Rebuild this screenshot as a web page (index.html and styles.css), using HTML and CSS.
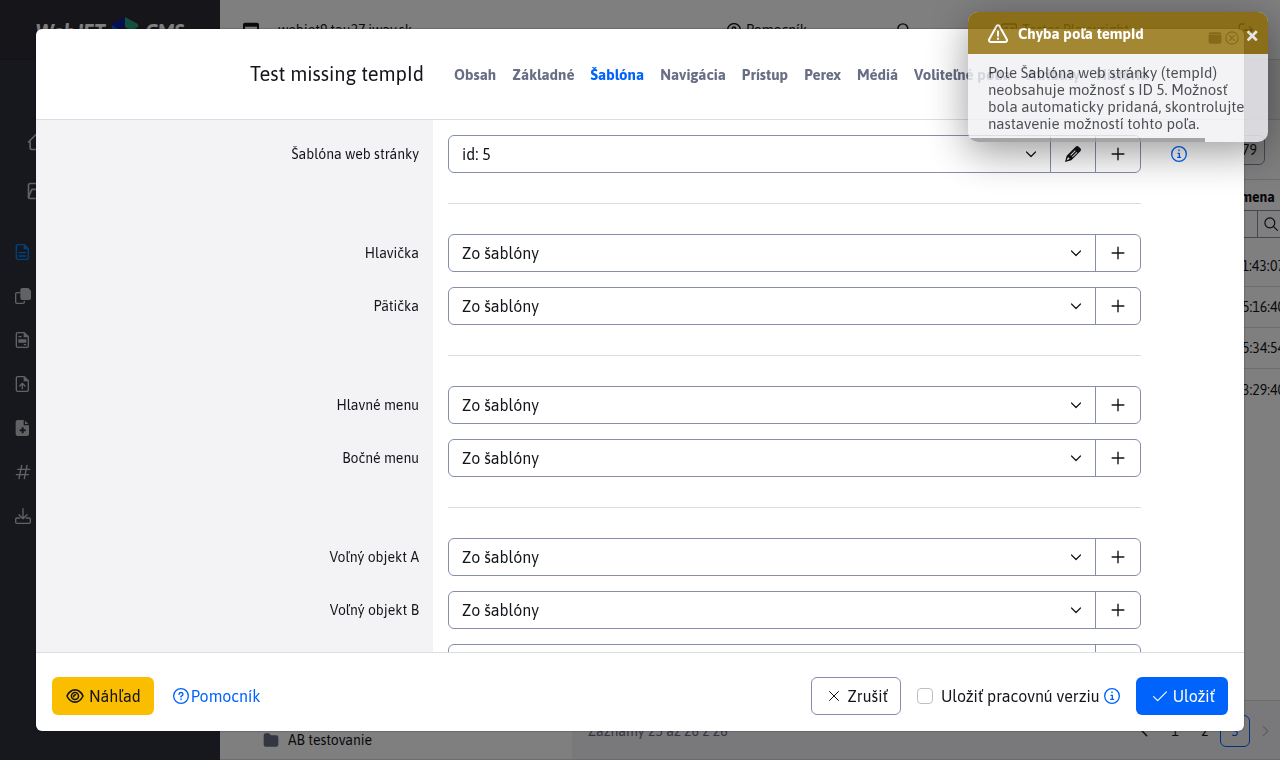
FILE: index.html
```html
<!DOCTYPE html>
<html lang="sk">
<head>
<meta charset="utf-8">
<title>WebJET CMS</title>
<link rel="stylesheet" href="styles.css">
</head>
<body>
<svg class="defs" aria-hidden="true">
  <symbol id="i-home" viewBox="0 0 24 24"><path d="M5 12H3l9-9 9 9h-2M5 12v7a2 2 0 0 0 2 2h10a2 2 0 0 0 2-2v-7"/></symbol>
  <symbol id="i-map" viewBox="0 0 24 24"><rect x="3" y="3" width="18" height="18" rx="2"/><path d="M3 19l4-9h6l3-4h5"/></symbol>
  <symbol id="i-doc" viewBox="0 0 24 24"><path d="M5 1h9l6 6v14a2 2 0 0 1-2 2H4a2 2 0 0 1-2-2V3a2 2 0 0 1 2-2zM6 13h10M6 18h10"/><path class="solid" d="M13 1l7 7h-7z"/></symbol>
  <symbol id="i-copy" viewBox="0 0 24 24"><path d="M8 7H3a2 2 0 0 0-2 2v12a2 2 0 0 0 2 2h9a2 2 0 0 0 2-2v-1"/><path class="solid" d="M11 0h9l4 4v11a3 3 0 0 1-3 3H11a3 3 0 0 1-3-3V3a3 3 0 0 1 3-3z"/></symbol>
  <symbol id="i-report" viewBox="0 0 24 24"><path d="M5 1h9l6 6v14a2 2 0 0 1-2 2H4a2 2 0 0 1-2-2V3a2 2 0 0 1 2-2zM6 7h3M14 19h2"/><path class="solid" d="M13 1l7 7h-7zM5 11h12v5H5z"/></symbol>
  <symbol id="i-upload" viewBox="0 0 24 24"><path d="M5 1h9l6 6v14a2 2 0 0 1-2 2H4a2 2 0 0 1-2-2V3a2 2 0 0 1 2-2zM11 19v-7M7 15l4-4 4 4"/><path class="solid" d="M13 1l7 7h-7z"/></symbol>
  <symbol id="i-add" viewBox="0 0 24 24"><path class="solid" fill-rule="evenodd" d="M4 0h9v8h8v13a3 3 0 0 1-3 3H4a3 3 0 0 1-3-3V3a3 3 0 0 1 3-3zM10 11v3H7v3h3v3h3v-3h3v-3h-3v-3zM15 1l5 5h-5z"/></symbol>
  <symbol id="i-hash" viewBox="0 0 24 24"><path d="M4 8h18M2 16h18M10 2L6 22M18 2l-4 20"/></symbol>
  <symbol id="i-download" viewBox="0 0 24 24"><path d="M12 1v15M6 10l6 6 6-6M7 15H3a2 2 0 0 0-2 2v4a2 2 0 0 0 2 2h18a2 2 0 0 0 2-2v-4a2 2 0 0 0-2-2h-4"/></symbol>
  <symbol id="i-window" viewBox="0 0 24 24"><path class="solid" fill-rule="evenodd" d="M3 1h18a3 3 0 0 1 3 3v16a3 3 0 0 1-3 3H3a3 3 0 0 1-3-3V4a3 3 0 0 1 3-3zM3 7v13h18V7z"/></symbol>
  <symbol id="i-panel" viewBox="0 0 24 24"><path class="solid" fill-rule="evenodd" d="M4 2h16a3 3 0 0 1 3 3v1H1V5a3 3 0 0 1 3-3zM1 7h22v12a3 3 0 0 1-3 3H4a3 3 0 0 1-3-3z"/></symbol>
  <symbol id="i-help" viewBox="0 0 24 24"><circle cx="12" cy="12" r="11"/><path d="M9 9.500q.3-2.700 3-2.700t3 2.400q0 1.600-3 3.300v1M12 16.500v1"/></symbol>
  <symbol id="i-info" viewBox="0 0 24 24"><circle cx="12" cy="12" r="11"/><path d="M12 6v1M10.500 11h2v6M10 17h4.500"/></symbol>
  <symbol id="i-search" viewBox="0 0 24 24"><circle cx="10" cy="10" r="8.500"/><path d="M16.500 16.500L23 23"/></symbol>
  <symbol id="i-card" viewBox="0 0 24 24"><rect x="1" y="3" width="22" height="18" rx="3"/><circle cx="8" cy="10" r="2"/><path d="M4 17q4-4 8 0M15 9h4M15 14h4"/></symbol>
  <symbol id="i-logout" viewBox="0 0 24 24"><path d="M9 3H5a3 3 0 0 0-3 3v12a3 3 0 0 0 3 3h4M9 12h13M17 7l5 5-5 5"/></symbol>
  <symbol id="i-down" viewBox="0 0 24 24"><path d="M3 8l9 9 9-9"/></symbol>
  <symbol id="i-left" viewBox="0 0 24 24"><path d="M15 4l-8 8 8 8"/></symbol>
  <symbol id="i-right" viewBox="0 0 24 24"><path d="M9 4l8 8-8 8"/></symbol>
  <symbol id="i-folder" viewBox="0 0 24 24"><path class="solid" d="M4 2h5l3 3h8a3 3 0 0 1 3 3v11a3 3 0 0 1-3 3H4a3 3 0 0 1-3-3V5a3 3 0 0 1 3-3z"/></symbol>
  <symbol id="i-plus" viewBox="0 0 24 24"><path d="M12 2v20M2 12h20"/></symbol>
  <symbol id="i-pencil" viewBox="0 0 24 24"><path class="solid" fill-rule="evenodd" d="M16 1q2.500-2 4.500 0l2.500 2.500q2 2 0 4.500L9.500 21.500 0 24l2.500-9.500zM4 18l-1.500 3.500L6 20l1-1-2-2zM15 6.500L8 13.500l1 1 7-7zM17.500 9l-7 7 1 1 7-7z"/></symbol>
  <symbol id="i-eye" viewBox="0 0 28 24"><path d="M1.500 12Q6 2.500 14 2.500T26.500 12Q22 21.500 14 21.500T1.500 12z"/><circle cx="14" cy="12" r="5.500"/><path d="M12 13q0-3 3-3"/></symbol>
  <symbol id="i-close" viewBox="0 0 24 24"><path d="M3 3l18 18M21 3L3 21"/></symbol>
  <symbol id="i-closecircle" viewBox="0 0 24 24"><circle cx="12" cy="12" r="10.500"/><path d="M8 8l8 8M16 8l-8 8"/></symbol>
  <symbol id="i-check" viewBox="0 0 24 24"><path d="M1 13l7 7L23 5"/></symbol>
  <symbol id="i-warn" viewBox="0 0 24 24"><path d="M10.300 2.500a2 2 0 0 1 3.400 0l9 16a2 2 0 0 1-1.700 3H3a2 2 0 0 1-1.700-3zM12 9v5M12 17.500v.5"/></symbol>
</svg>

<div class="app">
  <aside class="sidebar">
    <div class="logo">
      <span>WebJET</span>
      <svg class="cube" viewBox="0 0 26 30"><path fill="#0a1fa8" d="M13 0v9L6 13v8l-6-4V7z"/><path fill="#1858d8" d="M0 8l6 4v9l-6-3z"/><path fill="#2aa07a" d="M13 0l13 7v3l-7 4-6-4z"/><path fill="#178a78" d="M13 13l10 4v7l-10 6z"/></svg>
      <span>CMS</span>
    </div>
    <nav class="main-menu" aria-label="Hlavné menu">
      <a href="#" aria-label="Úvod"><svg class="icon i20"><use href="#i-home"/></svg></a>
      <a href="#" aria-label="Web stránky"><svg class="icon i20"><use href="#i-map"/></svg></a>
    </nav>
    <nav class="sub-menu" aria-label="Podmenu">
      <a href="#" class="current" aria-label="Stránky"><svg class="icon i16"><use href="#i-doc"/></svg></a>
      <a href="#" aria-label="Šablóny"><svg class="icon i16"><use href="#i-copy"/></svg></a>
      <a href="#" aria-label="Štatistika"><svg class="icon i16"><use href="#i-report"/></svg></a>
      <a href="#" aria-label="Nahrať"><svg class="icon i16"><use href="#i-upload"/></svg></a>
      <a href="#" aria-label="Pridať"><svg class="icon i16"><use href="#i-add"/></svg></a>
      <a href="#" aria-label="Značky"><svg class="icon i16"><use href="#i-hash"/></svg></a>
      <a href="#" aria-label="Export"><svg class="icon i16"><use href="#i-download"/></svg></a>
    </nav>
  </aside>
  <main class="main">
    <header class="topbar">
      <svg class="icon i16"><use href="#i-window"/></svg>
      <span class="host">webjet9.tau27.iway.sk</span>
      <a href="#" class="top-link"><svg class="icon i14 bold"><use href="#i-help"/></svg>Pomocník</a>
      <button class="plain" aria-label="Hľadať"><svg class="icon i14 bold"><use href="#i-search"/></svg></button>
      <a href="#" class="top-link user"><svg class="icon i16"><use href="#i-card"/></svg>Tester Playwright<svg class="icon i10"><use href="#i-down"/></svg></a>
      <button class="plain" aria-label="Odhlásiť"><svg class="icon i16"><use href="#i-logout"/></svg></button>
    </header>
    <div class="content">
      <section class="tree">
        <a href="#"><svg class="icon i16"><use href="#i-folder"/></svg>AB testovanie</a>
      </section>
      <section class="list">
        <div class="list-tabs"></div>
        <div class="list-tools"><span class="id-box">79</span></div>
        <table class="grid">
          <thead>
            <tr><th>zmena</th></tr>
            <tr class="filter"><td><div><button class="plain" aria-label="Filtrovať"><svg class="icon i14"><use href="#i-search"/></svg></button></div></td></tr>
          </thead>
          <tbody>
            <tr><td>11:43:07</td></tr>
            <tr><td>15:16:40</td></tr>
            <tr><td>15:34:54</td></tr>
            <tr><td>13:29:40</td></tr>
          </tbody>
        </table>
        <footer class="list-foot">
          <span class="count">Záznamy 25 až 26 z 26</span>
          <button class="page" aria-label="Späť"><svg class="icon i14 bold"><use href="#i-left"/></svg></button>
          <button class="page">1</button>
          <button class="page">2</button>
          <button class="page active">3</button>
          <button class="page off" aria-label="Ďalej" disabled><svg class="icon i14"><use href="#i-right"/></svg></button>
        </footer>
      </section>
    </div>
  </main>
</div>

<div class="backdrop">
  <div class="modal" role="dialog" aria-labelledby="dlg-title">
    <header class="modal-head">
      <h1 id="dlg-title">Test missing tempId</h1>
      <nav class="tabs" aria-label="Karty">
        <a href="#">Obsah</a><a href="#">Základné</a><a href="#" class="active">Šablóna</a><a href="#">Navigácia</a><a href="#">Prístup</a><a href="#">Perex</a><a href="#">Médiá</a><a href="#">Voliteľné polia</a><a href="#">Atribúty</a><a href="#">História</a>
      </nav>
      <div class="win-tools">
        <button class="plain" aria-label="Maximalizovať"><svg class="icon i14"><use href="#i-panel"/></svg></button>
        <button class="plain" aria-label="Zavrieť"><svg class="icon i14"><use href="#i-closecircle"/></svg></button>
      </div>
    </header>
    <form class="modal-body" id="form">
      <div class="row">
        <label for="f1">Šablóna web stránky</label>
        <div class="group">
          <span class="pick"><select id="f1"><option>id: 5</option></select><svg class="icon i12 bold"><use href="#i-down"/></svg></span>
          <button type="button" aria-label="Upraviť"><svg class="icon i16"><use href="#i-pencil"/></svg></button>
          <button type="button" aria-label="Pridať"><svg class="icon i14 bold"><use href="#i-plus"/></svg></button>
        </div>
        <span class="hint"><svg class="icon i16"><use href="#i-info"/></svg></span>
      </div>
      <div class="row"><hr></div>
      <div class="row">
        <label for="f2">Hlavička</label>
        <div class="group"><span class="pick"><select id="f2"><option>Zo šablóny</option></select><svg class="icon i12 bold"><use href="#i-down"/></svg></span><button type="button" aria-label="Pridať"><svg class="icon i14 bold"><use href="#i-plus"/></svg></button></div>
      </div>
      <div class="row">
        <label for="f3">Pätička</label>
        <div class="group"><span class="pick"><select id="f3"><option>Zo šablóny</option></select><svg class="icon i12 bold"><use href="#i-down"/></svg></span><button type="button" aria-label="Pridať"><svg class="icon i14 bold"><use href="#i-plus"/></svg></button></div>
      </div>
      <div class="row"><hr></div>
      <div class="row">
        <label for="f4">Hlavné menu</label>
        <div class="group"><span class="pick"><select id="f4"><option>Zo šablóny</option></select><svg class="icon i12 bold"><use href="#i-down"/></svg></span><button type="button" aria-label="Pridať"><svg class="icon i14 bold"><use href="#i-plus"/></svg></button></div>
      </div>
      <div class="row">
        <label for="f5">Bočné menu</label>
        <div class="group"><span class="pick"><select id="f5"><option>Zo šablóny</option></select><svg class="icon i12 bold"><use href="#i-down"/></svg></span><button type="button" aria-label="Pridať"><svg class="icon i14 bold"><use href="#i-plus"/></svg></button></div>
      </div>
      <div class="row"><hr></div>
      <div class="row">
        <label for="f6">Voľný objekt A</label>
        <div class="group"><span class="pick"><select id="f6"><option>Zo šablóny</option></select><svg class="icon i12 bold"><use href="#i-down"/></svg></span><button type="button" aria-label="Pridať"><svg class="icon i14 bold"><use href="#i-plus"/></svg></button></div>
      </div>
      <div class="row">
        <label for="f7">Voľný objekt B</label>
        <div class="group"><span class="pick"><select id="f7"><option>Zo šablóny</option></select><svg class="icon i12 bold"><use href="#i-down"/></svg></span><button type="button" aria-label="Pridať"><svg class="icon i14 bold"><use href="#i-plus"/></svg></button></div>
      </div>
      <div class="row">
        <label for="f8">Voľný objekt C</label>
        <div class="group"><span class="pick"><select id="f8"><option>Zo šablóny</option></select><svg class="icon i12 bold"><use href="#i-down"/></svg></span><button type="button" aria-label="Pridať"><svg class="icon i14 bold"><use href="#i-plus"/></svg></button></div>
      </div>
    </form>
    <footer class="modal-foot">
      <button class="btn warn"><svg class="icon eye bold"><use href="#i-eye"/></svg>Náhľad</button>
      <a href="#" class="help"><svg class="icon i16"><use href="#i-help"/></svg>Pomocník</a>
      <button class="btn outline"><svg class="icon i12"><use href="#i-close"/></svg>Zrušiť</button>
      <div class="draft">
        <input type="checkbox" id="draft"><label for="draft">Uložiť pracovnú verziu</label>
        <svg class="icon i16 blue"><use href="#i-info"/></svg>
      </div>
      <button class="btn primary"><svg class="icon i14"><use href="#i-check"/></svg>Uložiť</button>
    </footer>
  </div>
</div>

<div class="toast" role="alert">
  <div class="toast-head">
    <svg class="icon i20 bold"><use href="#i-warn"/></svg>
    <strong>Chyba poľa tempId</strong>
    <button class="plain" aria-label="Zavrieť">×</button>
  </div>
  <p>Pole Šablóna web stránky (tempId) neobsahuje možnosť s ID 5. Možnosť bola automaticky pridaná, skontrolujte nastavenie možností tohto poľa.</p>
  <div class="toast-progress"></div>
</div>
</body>
</html>
```

FILE: styles.css
```css
* { box-sizing: border-box; }
html, body { height: 100%; }
body {
  margin: 0;
  overflow: hidden;
  font: 16px/24px "Asap", "Noto Sans", sans-serif;
  color: #13151b;
  background: #fff;
}
button, select, input { font: inherit; color: inherit; }
button { cursor: pointer; }
a { color: inherit; text-decoration: none; }
.defs { display: none; }

.icon { flex: none; display: block; overflow: visible; fill: none; stroke: currentColor; stroke-width: 2; stroke-linecap: round; stroke-linejoin: round; }
.icon.bold { stroke-width: 2.4; }
.solid { fill: currentColor; stroke: none; }
.i10 { width: 10px; height: 10px; }
.i12 { width: 12px; height: 12px; }
.i14 { width: 14px; height: 14px; }
.i16 { width: 16px; height: 16px; }
.i20 { width: 20px; height: 20px; }
.eye { width: 18px; height: 16px; }
.blue { color: #0063fb; }
.plain { display: flex; border: 0; padding: 0; background: none; }

/* Application behind the dialog */
.app { display: flex; height: 100%; }
.sidebar { width: 220px; flex: none; background: #2f313c; color: #c4c5ca; }
.logo {
  display: flex; align-items: center; justify-content: center; gap: 7px;
  height: 60px; padding-top: 4px; border-bottom: 1px solid #26272f; background: #2a2b35;
  color: #fff; font-size: 20px; font-style: italic; font-weight: 700;
}
.cube { width: 26px; height: 30px; }
.main-menu { display: flex; flex-direction: column; gap: 29px; padding: 72px 26px 0; }
.main-menu a, .sub-menu a { display: block; }
.sub-menu { display: flex; flex-direction: column; gap: 28px; padding: 43px 15px 0; }
.sub-menu .current { color: #0084ff; }

.main { flex: 1; min-width: 0; display: flex; flex-direction: column; border-bottom: 1px solid #d8d9de; }
.topbar {
  display: flex; align-items: center; flex: none;
  height: 60px; padding: 0 26px 0 23px; border-bottom: 1px solid #d8d9de;
  font-size: 14px;
}
.host { margin: 0 auto 0 19px; }
.top-link { display: flex; align-items: center; gap: 5px; margin-right: 90px; }
.user { margin: 0 94px 0 90px; }
.content { flex: 1; min-height: 0; display: flex; }
.tree { width: 352px; flex: none; display: flex; flex-direction: column; justify-content: flex-end; padding: 0 43px 7px; font-size: 14px; }
.tree a { display: flex; align-items: center; gap: 9px; }
.tree .icon { color: #686e84; }
.list { flex: 1; min-width: 0; display: flex; flex-direction: column; overflow: hidden; }
.list-tabs { flex: none; height: 60px; background: #f3f3f6; border-bottom: 1px solid #d8d9de; }
.list-tools { flex: none; display: flex; justify-content: flex-end; align-items: center; height: 60px; padding-right: 15px; border-bottom: 1px solid #d8d9de; }
.id-box { width: 80px; height: 30px; padding: 2px 7px; border: 1px solid #868eaa; border-radius: 6px; text-align: right; font-size: 14px; }
.grid { width: calc(100% + 8px); border-collapse: separate; border-spacing: 0; font-size: 14px; line-height: 20px; }
.grid th { height: 30px; padding: 4px 13px 0; text-align: right; }
.grid td { height: 41px; padding: 0 3px 0 0; border-bottom: 1px solid #d8d9de; text-align: right; }
.grid tbody tr:last-child td { border-bottom: 0; }
.grid .filter td { height: 36px; padding: 0; border: 0; vertical-align: top; }
.filter div { display: flex; justify-content: flex-end; height: 28px; border: 1px solid #868eaa; border-right: 0; }
.filter button { align-items: center; width: 31px; padding-left: 6px; border-left: 1px solid #868eaa; }
.list-foot {
  display: flex; align-items: center; margin-top: auto; height: 59px;
  padding: 1px 0 0 16px; border-top: 1px solid #d8d9de; background: #f3f3f6; font-size: 14px;
}
.count { margin-right: auto; color: #686e84; }
.page { display: flex; align-items: center; justify-content: center; width: 30px; height: 32px; padding: 0; border: 0; background: none; }
.page.active { border: 1px solid #0063fb; border-radius: 6px; color: #0063fb; }
.page.off { color: #b8bac4; }

/* Dialog */
.backdrop { position: fixed; inset: 0; display: flex; padding: 29px 36px; background: rgba(0, 0, 0, .5); }
.modal { flex: 1; min-width: 0; display: flex; flex-direction: column; overflow: hidden; border-radius: 6px; background: #fff; box-shadow: 0 0 2px rgba(0, 0, 0, .5); }
.modal-head {
  position: relative; flex: none; display: grid; align-items: center;
  grid-template-columns: 388fr 790fr; column-gap: 30px;
  height: 91px; border-bottom: 1px solid #dcdde2;
}
.modal-head h1 { margin: 0; text-align: right; font-size: 20px; font-weight: 400; }
.tabs { display: flex; gap: 16px; min-width: 0; padding-top: 2px; font-size: 15px; font-weight: 700; color: #686e84; white-space: nowrap; }
.tabs .active { color: #0063fb; }
.win-tools { position: absolute; top: 2px; right: 5px; display: flex; gap: 3px; color: #686e84; }

.modal-body {
  flex: 1; min-height: 0; overflow: hidden; padding-top: 15px;
  background: linear-gradient(to right, #f3f3f6 32.87%, #fff 0);
}
.row { display: grid; grid-template-columns: 397fr 723fr 88fr; align-items: center; margin-bottom: 15px; }
.row > label { padding-right: 14px; text-align: right; font-size: 14px; }
.group { display: flex; height: 38px; margin: 0 15px; border: 1px solid #868eaa; border-radius: 6px; overflow: hidden; }
.pick { flex: 1; display: grid; align-items: center; }
.pick > * { grid-area: 1 / 1; }
.pick select { width: 100%; height: 100%; padding: 0 40px 0 13px; border: 0; outline: 0; background: none; appearance: none; }
.pick .icon { justify-self: end; margin-right: 13px; pointer-events: none; }
.group button { display: flex; align-items: center; justify-content: center; width: 45px; padding: 0; border: 0; border-left: 1px solid #868eaa; background: none; }
.hint { padding-left: 15px; color: #0063fb; }
.row hr { grid-column: 2; width: auto; height: 1px; margin: 15px; border: 0; background: #dcdde2; }

.modal-foot { flex: none; display: flex; align-items: center; padding: 24px 16px 16px; border-top: 1px solid #dcdde2; }
.btn { display: flex; align-items: center; gap: 6px; height: 38px; padding: 0 12px 0 16px; border: 1px solid transparent; border-radius: 6px; }
.warn { gap: 5px; padding-left: 13px; background: #fabd00; }
.help { display: flex; align-items: center; gap: 2px; margin: 0 auto 0 19px; color: #0063fb; }
.outline { gap: 8px; background: #fff; border-color: #868eaa; }
.primary { background: #0063fb; color: #fff; }
.draft { display: flex; align-items: center; gap: 4px; margin: 0 16px; }
.draft input { appearance: none; width: 16px; height: 16px; margin: 0 4px 0 0; border: 1px solid #bfbfbf; border-radius: 4px; background: #fff; }

/* Notification */
.toast {
  position: fixed; top: 12px; right: 12px; width: 300px; overflow: hidden;
  border-radius: 10px; background: #f1f1f5; color: #212529; opacity: .8;
  box-shadow: 0 10px 40px rgba(0, 0, 0, .5);
}
.toast-head { display: flex; align-items: center; gap: 10px; height: 42px; padding: 2px 9px 0 20px; background: #8e6a00; color: #fff; font-size: 15px; }
.toast-head button { margin-left: auto; font-size: 24px; font-weight: 700; line-height: 20px; }
.toast p { margin: 0; padding: 10px 20px; font-size: 15px; line-height: 17px; }
.toast-progress { position: absolute; left: 0; bottom: 0; width: 79%; height: 4px; background: #8e8e8e; }
```
